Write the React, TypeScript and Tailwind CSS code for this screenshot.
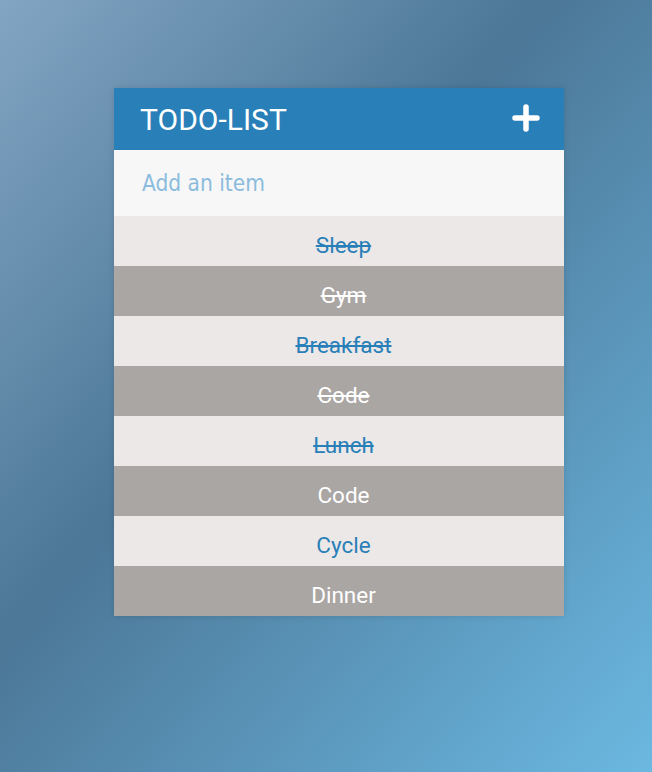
import React from "react";

const items = [
  { text: "Sleep", done: true },
  { text: "Gym", done: true },
  { text: "Breakfast", done: true },
  { text: "Code", done: true },
  { text: "Lunch", done: true },
  { text: "Code", done: false },
  { text: "Cycle", done: false },
  { text: "Dinner", done: false },
];

export default function App() {
  return (
    <div className="w-[652px] h-[772px] bg-[linear-gradient(to_bottom_right,#82a5c3_0%,#4c7797_42%,#6bb8e1_100%)] pt-[88px] pl-[114px]">
      <div className="w-[450px] shadow-[0_0_6px_rgba(0,0,0,0.12)]">
        <div className="h-[62px] bg-[#2980b9] flex items-center justify-between pl-[26px] pr-[24px]">
          <span className="text-white text-[30px] leading-none font-['Roboto',sans-serif] pt-[2px]">TODO-LIST</span>
          <svg width="28" height="28" viewBox="0 0 28 28" className="mb-[2px]">
            <path d="M14 3 V25 M3 14 H25" stroke="#ffffff" strokeWidth="5.5" strokeLinecap="round" fill="none" />
          </svg>
        </div>
        <div className="h-[66px] bg-[#f7f7f7] flex items-center pl-[28px] pt-[1px]">
          <input
            placeholder="Add an item"
            className="w-full bg-transparent outline-none text-[22.5px] font-stretch-condensed font-['DejaVu_Sans_Condensed','DejaVu_Sans',sans-serif] placeholder:text-[#8cbcdd] text-[#2980b9]"
          />
        </div>
        {items.map((it, i) => (
          <div
            key={i}
            className={`h-[50px] flex items-center justify-center text-[22.5px] leading-none font-['Roboto',sans-serif] pt-[9px] pl-[9px] ${
              i % 2 === 0 ? "bg-[#ece8e7] text-[#2980b9]" : "bg-[#aaa6a4] text-white"
            } ${it.done ? "line-through" : ""}`}
          >
            {it.text}
          </div>
        ))}
      </div>
    </div>
  );
}
